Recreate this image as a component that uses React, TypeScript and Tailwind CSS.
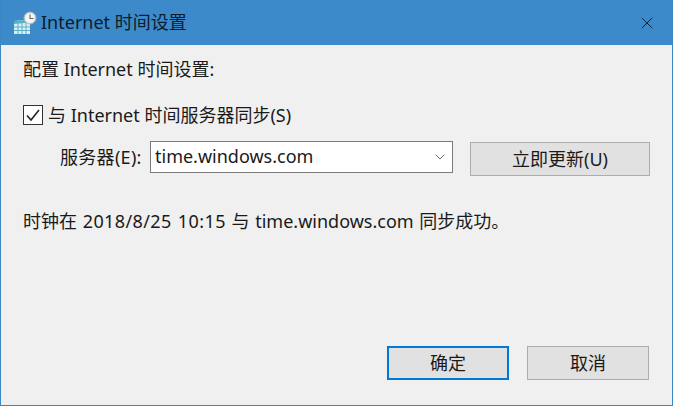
import { ChevronDown, X } from 'lucide-react';

const font = "font-['Noto_Sans','Noto_Sans_CJK_SC',sans-serif]";

function TimeIcon() {
  return (
    <svg width="24" height="24" viewBox="0 0 24 24" className="shrink-0">
      <path d="M1 10 L17 8.500 V23 H1 Z" fill="#d8f0f2" />
      <path d="M1 10 L17 8.500 V11.500 L1 13 Z" fill="#58b0c6" />
      <path d="M5 11 V23 M9 11 V23 M13 11 V23 M1 16 H17 M1 19.500 H17" stroke="#5cb0c2" strokeWidth="1" />
      <circle cx="17" cy="7" r="6" fill="#e2e5e4" stroke="#a9b5ba" />
      <circle cx="17" cy="7" r="4.500" fill="#f6f6f2" />
      <path d="M17 3.500 V7.500 H20.500" fill="none" stroke="#66665f" strokeWidth="1.100" />
    </svg>
  );
}

export default function App() {
  return (
    <div className={`${font} flex h-[406px] w-[673px] flex-col overflow-hidden border-x border-b border-[#3d86c6] bg-[#f0f0f0] text-[18px] text-[#1a1a1a]`}>
      <div className="flex h-[45px] shrink-0 items-center bg-[#3d8acb] pl-[12px] pr-[15px]">
        <TimeIcon />
        <span className="ml-[4px] text-[#0c1c2c]">Internet 时间设置</span>
        <X className="ml-auto h-[20px] w-[20px] text-[#10263c]" strokeWidth={1.2} />
      </div>

      <div className="flex flex-1 flex-col pl-[22px] pr-[22px]">
        <p className="mt-[11px] h-[26px] leading-[26px]">配置 Internet 时间设置:</p>

        <label className="mt-[20px] flex h-[26px] items-center">
          <span className="flex h-[20px] w-[20px] items-center justify-center border border-[#333] bg-white">
            <svg width="16" height="16" viewBox="0 0 16 16">
              <path d="M2 8.500 L6 13 L14 3" fill="none" stroke="#222" strokeWidth="1.600" />
            </svg>
          </span>
          <span className="ml-[5px]">与 Internet 时间服务器同步(S)</span>
        </label>

        <div className="mt-[13px] flex items-start pl-[37px]">
          <span className="mt-[3px] w-[90px] leading-[26px] tracking-[0.3px]">服务器(E):</span>
          <div className="flex h-[32px] w-[303px] items-center border border-[#7a7a7a] bg-white pb-[2px] pl-[4px] pr-[4px]">
            <span>time.windows.com</span>
            <ChevronDown className="ml-auto mt-[2px] h-[16px] w-[16px] text-[#555]" strokeWidth={1.300} />
          </div>
          <button className="ml-[17px] mt-[1px] h-[34px] w-[180px] border border-[#adadad] bg-[#e1e1e1]">立即更新(U)</button>
        </div>

        <p className="mt-[32px] h-[26px] leading-[26px] [word-spacing:1px]">
          时钟在 <span className="tracking-[0.4px]">2018/8/25 10:15</span> 与 time.windows.com 同步成功。
        </p>

        <div className="mt-auto mb-[25px] flex justify-end gap-[18px] pr-[1px]">
          <button className="h-[34px] w-[122px] border-2 border-[#0078d7] bg-[#e1e1e1]">确定</button>
          <button className="h-[34px] w-[122px] border border-[#adadad] bg-[#e1e1e1]">取消</button>
        </div>
      </div>
    </div>
  );
}
